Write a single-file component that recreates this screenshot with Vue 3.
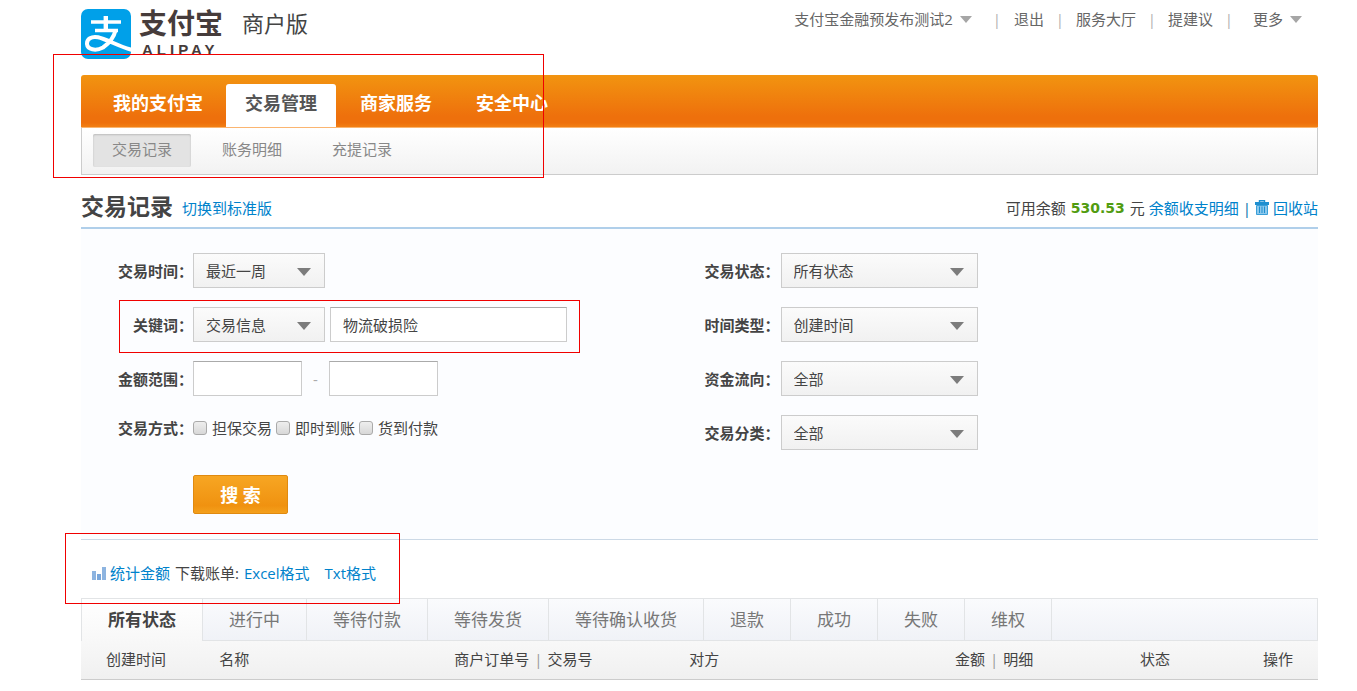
<script setup>
import { ref } from 'vue'

const mainNav = ['我的支付宝', '交易管理', '商家服务', '安全中心']
const subNav = ['交易记录', '账务明细', '充提记录']
const links = ['退出', '服务大厅', '提建议']
const states = ['所有状态', '进行中', '等待付款', '等待发货', '等待确认收货', '退款', '成功', '失败', '维权']
const methods = ['担保交易', '即时到账', '货到付款']
const selects = [
  { id: 'status', label: '交易状态：', value: '所有状态' },
  { id: 'timeType', label: '时间类型：', value: '创建时间' },
  { id: 'flow', label: '资金流向：', value: '全部' },
  { id: 'category', label: '交易分类：', value: '全部' }
]
const keyword = ref('物流破损险')
</script>

<template>
  <div class="page">
    <header class="header">
      <a class="logo" href="#">
        <svg class="logo-mark" viewBox="0 0 50 50" aria-hidden="true">
          <rect width="50" height="50" rx="7" fill="#00a0e9" />
          <g fill="none" stroke="#fff">
            <path d="M10 13H40M14 21.500H37" stroke-width="3.400" />
            <path d="M24.800 7V22" stroke-width="4.400" />
            <path d="M34.800 20.500C33 28 28 34.500 22 38.500C14.500 42.500 6.500 40.500 6 35C5.700 30 10.500 27 17 28.300C25 30 37 37 51 41" stroke-width="4" />
          </g>
        </svg>
        <span class="logo-text">
          <span class="logo-cn">支付宝</span>
          <span class="logo-en">ALIPAY</span>
        </span>
      </a>
      <span class="edition">商户版</span>
      <nav class="top-links">
        <button class="drop" type="button">支付宝金融预发布测试2
          <svg width="12" height="7" viewBox="0 0 12 7"><path d="M0 0H12L6 7Z" fill="#a6a6a6" /></svg>
        </button>
        <template v-for="l in links" :key="l">
          <span class="bar">|</span><a href="#">{{ l }}</a>
        </template>
        <span class="bar">|</span>
        <button class="drop more" type="button">更多
          <svg width="12" height="7" viewBox="0 0 12 7"><path d="M0 0H12L6 7Z" fill="#a6a6a6" /></svg>
        </button>
      </nav>
    </header>

    <div class="navs">
      <nav class="main-nav">
        <a v-for="(n, i) in mainNav" :key="n" href="#" :class="{ active: i === 1 }">{{ n }}</a>
      </nav>
      <nav class="sub-nav">
        <a v-for="(n, i) in subNav" :key="n" href="#" :class="{ active: i === 0 }">{{ n }}</a>
      </nav>
      <div class="mark mark-nav"></div>
    </div>

    <div class="title-row">
      <h1>交易记录</h1>
      <a href="#" class="switch">切换到标准版</a>
      <div class="balance">
        <span>可用余额</span>
        <strong>530.53</strong>
        <span>元</span>
        <a href="#">余额收支明细</a>
        <span class="split">|</span>
        <a href="#" class="bin">
          <svg width="14" height="16" viewBox="0 0 14 16" aria-hidden="true">
            <path d="M4.500 2.500V.8H9.500V2.500" fill="none" stroke="#1f8fd0" stroke-width="1.400" />
            <path d="M0 2H14V5H0Z" fill="#1f8fd0" />
            <path d="M1.500 5.500H12.500V14.500H1.500Z" fill="#8cc8ec" stroke="#3a9fd8" />
            <path d="M4.500 6.500V13M7 6.500V13M9.500 6.500V13" stroke="#1f8fd0" />
          </svg>回收站</a>
      </div>
    </div>

    <form class="filter" @submit.prevent>
      <div class="col left">
        <div class="row">
          <label class="label" for="period">交易时间：</label>
          <span class="select short">
            <select id="period"><option>最近一周</option></select>
            <svg width="14" height="8" viewBox="0 0 14 8"><path d="M0 0H14L7 8Z" fill="#7c7c7c" /></svg>
          </span>
        </div>
        <div class="row">
          <label class="label" for="kwType">关键词：</label>
          <span class="select short">
            <select id="kwType"><option>交易信息</option></select>
            <svg width="14" height="8" viewBox="0 0 14 8"><path d="M0 0H14L7 8Z" fill="#7c7c7c" /></svg>
          </span>
          <input v-model="keyword" class="text keyword" type="text" aria-label="关键词" />
          <div class="mark mark-keyword"></div>
        </div>
        <div class="row">
          <label class="label" for="min">金额范围：</label>
          <input id="min" class="text amount" type="text" />
          <span class="dash">-</span>
          <input class="text amount" type="text" aria-label="最高金额" />
        </div>
        <div class="row checks" role="group" aria-labelledby="method">
          <span id="method" class="label">交易方式：</span>
          <label v-for="m in methods" :key="m" class="check"><input type="checkbox" />{{ m }}</label>
        </div>
        <button class="search" type="submit">搜 索</button>
      </div>
      <div class="col right">
        <div v-for="s in selects" :key="s.id" class="row">
          <label class="label" :for="s.id">{{ s.label }}</label>
          <span class="select long">
            <select :id="s.id"><option>{{ s.value }}</option></select>
            <svg width="14" height="8" viewBox="0 0 14 8"><path d="M0 0H14L7 8Z" fill="#7c7c7c" /></svg>
          </span>
        </div>
      </div>
    </form>

    <div class="actions">
      <svg width="14" height="13" viewBox="0 0 14 13" aria-hidden="true">
        <path d="M0 4H4V13H0Z" fill="#8db4e0" /><path d="M5 7H9V13H5Z" fill="#7aa7da" /><path d="M10 0H14V13H10Z" fill="#8db4e0" />
      </svg>
      <a href="#">统计金额</a>
      <span class="download">下载账单:</span>
      <a href="#">Excel格式</a>
      <a href="#" class="txt">Txt格式</a>
      <div class="mark mark-actions"></div>
    </div>

    <div class="tabs">
      <button v-for="(s, i) in states" :key="s" type="button" :class="{ active: i === 0 }">{{ s }}</button>
    </div>
    <table class="records">
      <thead>
        <tr>
          <th class="c-time">创建时间</th>
          <th class="c-wide">名称</th>
          <th class="c-wide">商户订单号<i>|</i>交易号</th>
          <th class="c-wide">对方</th>
          <th class="c-amount">金额<i>|</i>明细</th>
          <th class="c-state">状态</th>
          <th class="c-op">操作</th>
        </tr>
      </thead>
    </table>
  </div>
</template>

<style>
body {
  background: #fff;
}
</style>

<style scoped>
.page {
  padding: 0 39px 12px 81px;
  min-width: 1000px;
  font: 15px/20px "Open Sans", "Noto Sans CJK SC", sans-serif;
  color: #444;
}
.page * {
  box-sizing: border-box;
}
a {
  color: #0082cb;
  text-decoration: none;
}
button,
input,
select {
  font: inherit;
  color: inherit;
  margin: 0;
}
button {
  border: 0;
  background: none;
  padding: 0;
}
.mark {
  position: absolute;
  border: 1px solid #f00000;
  pointer-events: none;
  z-index: 2;
}

.header {
  display: flex;
  align-items: flex-start;
  height: 75px;
  padding-top: 9px;
}
.logo {
  display: flex;
  gap: 8px;
  color: #463c3b;
}
.logo-mark {
  width: 50px;
  height: 50px;
}
.logo-text {
  display: flex;
  flex-direction: column;
  width: 86px;
  font-weight: 700;
}
.logo-cn {
  font-family: "Liberation Sans", "Noto Sans CJK SC", sans-serif;
  font-size: 28px;
  line-height: 32px;
}
.logo-en {
  padding-left: 3px;
  font: 700 15px/18px "Liberation Sans", sans-serif;
  letter-spacing: 4px;
}
.edition {
  margin-left: 17px;
  font-size: 22px;
  line-height: 28px;
}
.top-links {
  display: flex;
  margin-left: auto;
  margin-right: 16px;
  color: #666;
}
.top-links a {
  color: #666;
}
.drop {
  display: flex;
  align-items: center;
  gap: 7px;
  line-height: 20px;
}
.bar {
  width: 32px;
  text-align: center;
  color: #b0b0b0;
}
.drop + .bar {
  width: 42px;
  padding-left: 8px;
}
.more {
  margin-left: 8px;
}

.navs {
  position: relative;
}
.main-nav {
  display: flex;
  align-items: flex-end;
  height: 52px;
  padding-left: 10px;
  border-radius: 3px 3px 0 0;
  background: linear-gradient(#f29410, #ee700c 80%, #ee700c 92%, #f28014);
}
.main-nav a {
  padding: 0 22px;
  font-size: 18px;
  line-height: 38px;
  height: 43px;
  font-weight: 700;
  color: #fff;
}
.main-nav a.active {
  margin: 0 2px 0 1px;
  padding: 0 19px;
  border-radius: 3px 3px 0 0;
  background: #fff;
  color: #555;
}
.sub-nav {
  display: flex;
  gap: 12px;
  height: 48px;
  padding: 6px 11px 0;
  border: 1px solid #ccc;
  border-top-color: #fbb570;
  background: linear-gradient(#fff, #f2f2f2);
}
.sub-nav a {
  padding: 0 19px;
  height: 33px;
  line-height: 31px;
  color: #888;
}
.sub-nav a.active {
  border-radius: 2px;
  background: #e3e3e3;
  box-shadow: inset 0 1px 2px #bbb;
}
.mark-nav {
  left: -28px;
  top: -21px;
  width: 491px;
  height: 124px;
}

.title-row {
  display: flex;
  align-items: center;
  height: 54px;
  padding-top: 14px;
  border-bottom: 2px solid #b0cfea;
}
h1 {
  margin: 0 9px 4px 0;
  font-size: 23px;
  line-height: 30px;
}
.balance {
  display: flex;
  align-items: center;
  gap: 4px;
  margin-left: auto;
}
.balance strong {
  margin: 0 1px;
  font: 700 14px/20px "DejaVu Sans", sans-serif;
  color: #519c10;
}
.split {
  color: #0068a8;
}
.bin {
  display: flex;
  align-items: center;
  gap: 4px;
}

.filter {
  display: grid;
  grid-template-columns: 1fr 1fr;
  padding: 24px 0 25px;
  border-bottom: 1px solid #ccd9e6;
  background: #fcfdff;
}
.col {
  display: flex;
  flex-direction: column;
  gap: 19px;
}
.row {
  position: relative;
  display: flex;
  align-items: center;
  gap: 5px;
  height: 35px;
}
.label {
  font-weight: 700;
  text-align: right;
}
.left .label {
  width: 112px;
  margin-right: -5px;
}
.right .label {
  width: 80px;
  margin-right: -4px;
}
.select {
  position: relative;
  display: block;
}
.select select {
  width: 100%;
  height: 35px;
  padding: 0 12px;
  appearance: none;
  border: 1px solid #ccc;
  border-radius: 0;
  background: linear-gradient(#fbfbfb, #f1f1f1);
}
.select svg {
  position: absolute;
  right: 14px;
  top: 15px;
  pointer-events: none;
}
.short {
  width: 132px;
}
.long {
  width: 197px;
}
.text {
  height: 35px;
  padding: 0 12px;
  border: 1px solid #ccc;
  border-top-color: #aaa;
  background: #fff;
}
.keyword {
  width: 237px;
}
.amount {
  width: 109px;
}
.dash {
  width: 17px;
  text-align: center;
  color: #aaa;
}
.checks {
  gap: 4px;
  height: 26px;
}
.left .checks .label {
  margin-right: -4px;
}
.check {
  display: flex;
  align-items: center;
  gap: 5px;
}
.check input {
  appearance: none;
  width: 14px;
  height: 14px;
  border: 1px solid #aaa;
  border-radius: 3px;
  background: linear-gradient(#eee, #d8d8d8);
}
.search {
  width: 95px;
  height: 39px;
  margin: 15px 0 0 112px;
  border: 1px solid #e08a10;
  border-radius: 2px;
  background: linear-gradient(#f7a623, #f09210 80%, #f4a01c);
  color: #fff;
  font-size: 18px;
  font-weight: 700;
}
.mark-keyword {
  left: 38px;
  top: -7px;
  width: 461px;
  height: 53px;
}

.actions {
  position: relative;
  display: flex;
  align-items: center;
  gap: 5px;
  height: 58px;
  padding: 8px 0 0 11px;
}
.actions svg {
  margin-right: -1px;
}
.txt {
  margin-left: 10px;
}
.mark-actions {
  left: -16px;
  top: -7px;
  width: 335px;
  height: 71px;
}

.tabs {
  display: flex;
  height: 43px;
  border: 1px solid #e2e4e6;
  background: linear-gradient(#fafbfd, #f0f2f7);
}
.tabs button {
  padding: 0 26px;
  border-right: 1px solid #e2e4e6;
  font-size: 17px;
  color: #777;
}
.tabs button.active {
  height: 42px;
  background: linear-gradient(#fff, #f8f8f8);
  color: #444;
  font-weight: 700;
}
.records {
  width: 100%;
  table-layout: fixed;
  border-collapse: collapse;
  border-bottom: 1px solid #ccc;
  background: linear-gradient(#f8f8f8, #f0f0f0);
}
.records th {
  height: 38px;
  padding: 0 0 2px 25px;
  font-weight: 400;
  text-align: left;
}
.records i {
  margin: 0 5px;
  font-style: normal;
  color: #999;
}
.c-time {
  width: 9%;
}
.records .c-wide {
  width: 19%;
  padding-left: 27px;
}
.records .c-amount {
  width: 13%;
  padding: 0 25px 2px 0;
  text-align: right;
}
.records .c-state {
  width: 16%;
  padding: 0 4px 2px 0;
  text-align: center;
}
.records .c-op {
  width: 5%;
  padding: 0 25px 2px 0;
  text-align: right;
  white-space: nowrap;
}
</style>
